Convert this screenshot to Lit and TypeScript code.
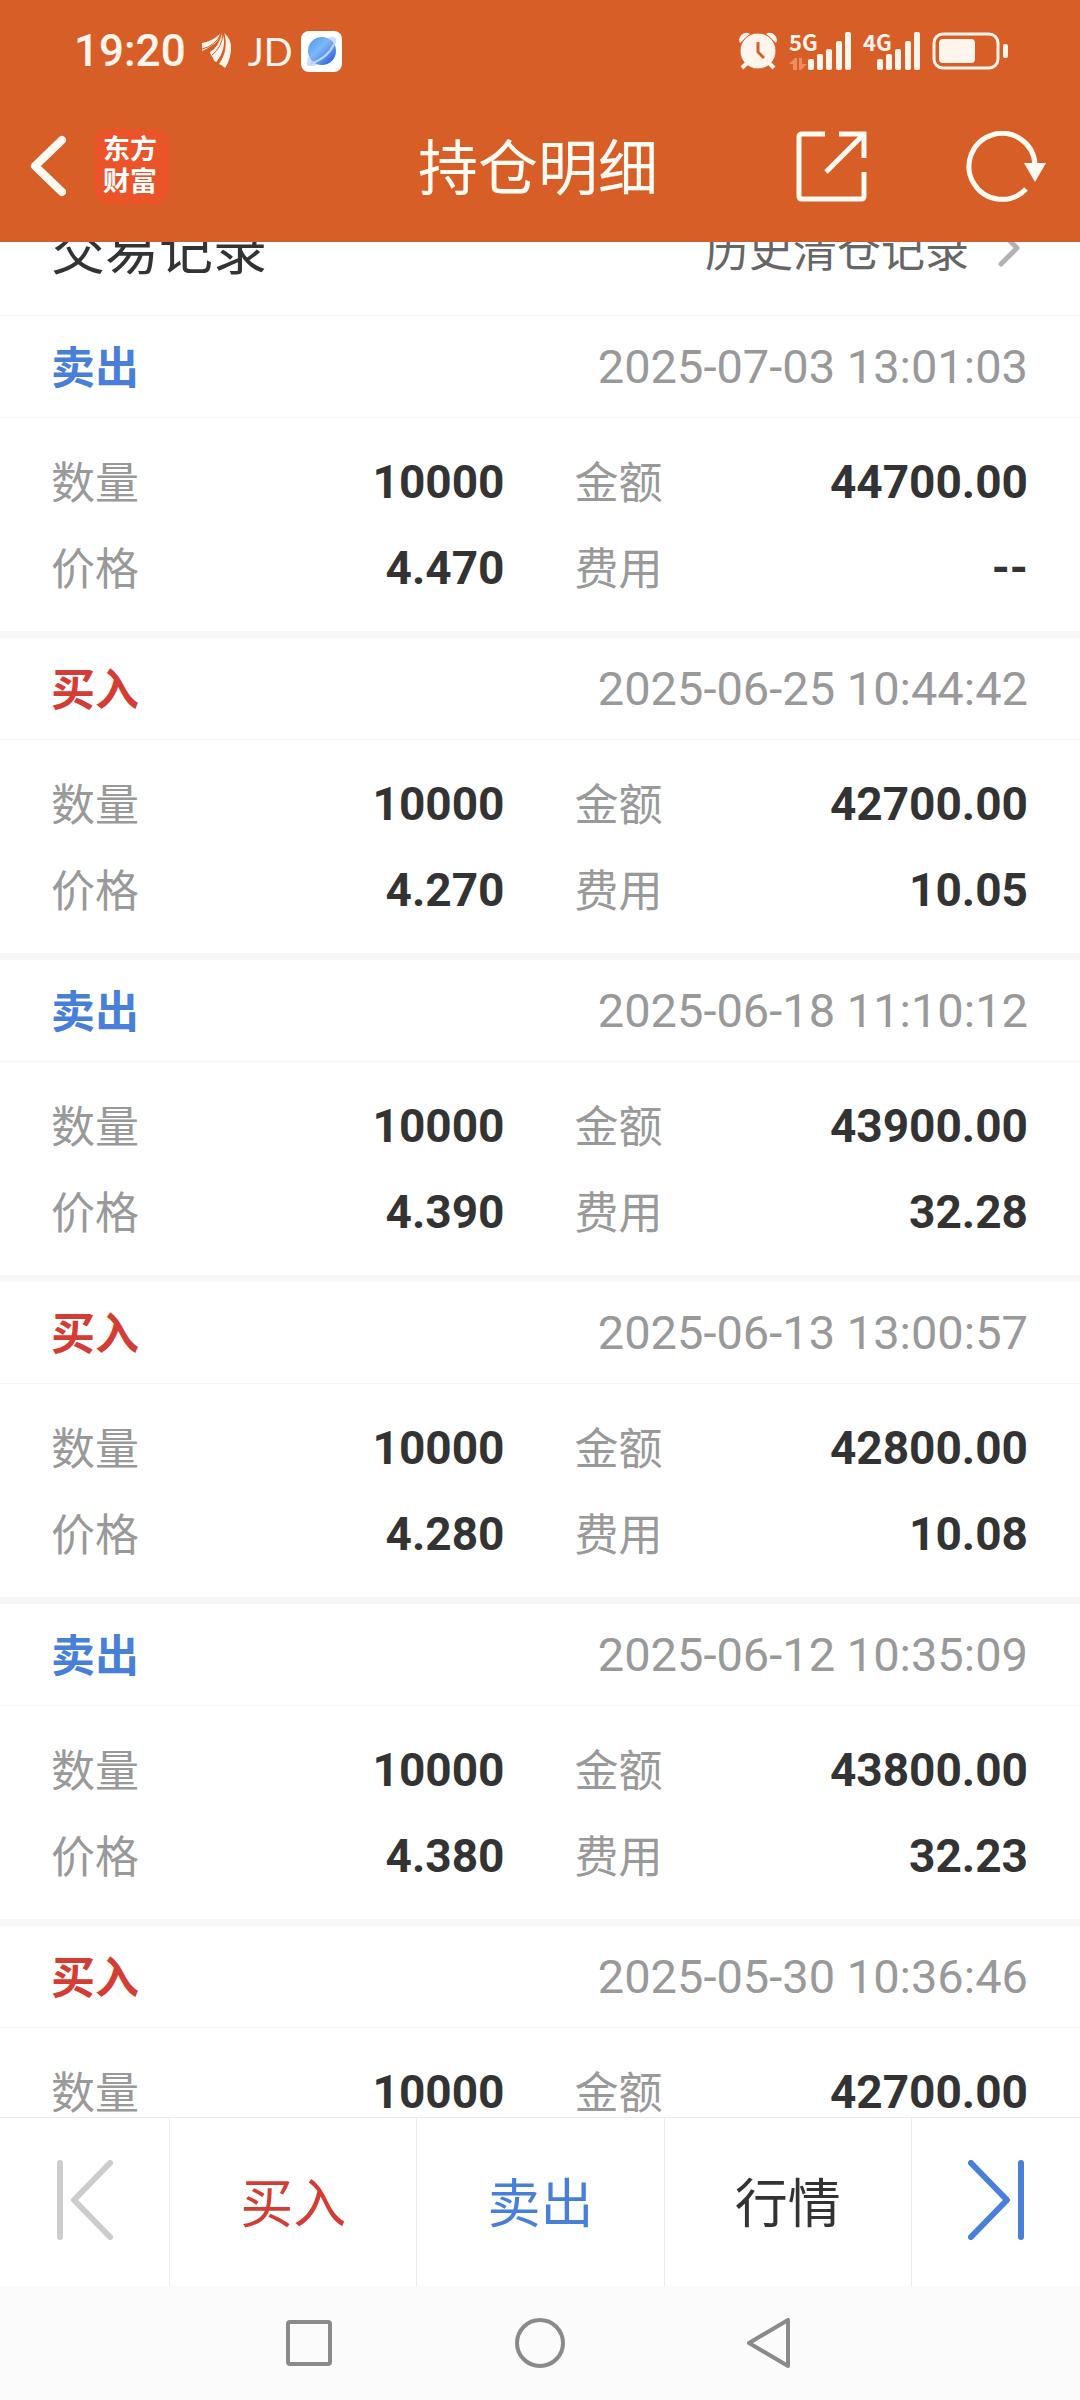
import { LitElement, html, css, svg } from "lit";
import { customElement, property } from "lit/decorators.js";
import { classMap } from "lit/directives/class-map.js";

interface Trade {
  side: "buy" | "sell";
  time: string;
  quantity: string;
  amount: string;
  price: string;
  fee: string;
}

const TRADES: Trade[] = [
  { side: "sell", time: "2025-07-03 13:01:03", quantity: "10000", amount: "44700.00", price: "4.470", fee: "--" },
  { side: "buy", time: "2025-06-25 10:44:42", quantity: "10000", amount: "42700.00", price: "4.270", fee: "10.05" },
  { side: "sell", time: "2025-06-18 11:10:12", quantity: "10000", amount: "43900.00", price: "4.390", fee: "32.28" },
  { side: "buy", time: "2025-06-13 13:00:57", quantity: "10000", amount: "42800.00", price: "4.280", fee: "10.08" },
  { side: "sell", time: "2025-06-12 10:35:09", quantity: "10000", amount: "43800.00", price: "4.380", fee: "32.23" },
  { side: "buy", time: "2025-05-30 10:36:46", quantity: "10000", amount: "42700.00", price: "4.270", fee: "10.05" },
];

const signalBars = svg`
  <rect x="0" y="27" width="6" height="11" rx="2" />
  <rect x="9" y="22" width="6" height="16" rx="2" />
  <rect x="18" y="17" width="6" height="21" rx="2" />
  <rect x="28" y="9" width="6" height="29" rx="2" />
  <rect x="37" y="0" width="6" height="38" rx="2" />`;

@customElement("status-bar")
export class StatusBar extends LitElement {
  static styles = css`
    :host {
      display: flex;
      align-items: center;
      justify-content: space-between;
      height: 102px;
      padding: 0 72px 0 74px;
      color: #fff5ec;
      font-family: Roboto, sans-serif;
    }
    .group {
      display: flex;
      align-items: center;
    }
    .left {
      gap: 16px;
    }
    .right {
      gap: 12px;
    }
    svg {
      display: block;
      fill: currentColor;
    }
    .time {
      font-size: 44px;
      font-weight: 500;
      line-height: 52px;
    }
    .jd {
      font-family: Lato, sans-serif;
      font-size: 38px;
      line-height: 52px;
    }
    .apps {
      display: flex;
      align-items: center;
      gap: 8px;
    }
    .signal {
      position: relative;
      display: flex;
      justify-content: flex-end;
    }
    .signal.five {
      width: 62px;
    }
    .signal.four {
      width: 57px;
    }
    .net {
      position: absolute;
      left: 0;
      top: 0;
      font-family: "Noto Sans CJK SC", sans-serif;
      font-size: 22px;
      font-weight: 700;
      line-height: 18px;
    }
    .data {
      position: absolute;
      left: 0;
      bottom: 0;
      color: #ee8c62;
    }
  `;

  render() {
    return html`
      <div class="group left">
        <span class="time">19:20</span>
        <svg width="30" height="36" viewBox="0 0 30 36" aria-hidden="true">
          <path d="M0 10Q9 9 18 1Q17 9 9 13Q5 16 0 18Z" />
          <path d="M20 0Q20 12 11 24L8 19Q17 14 20 0Z" />
          <path d="M8 20Q17 15 21 1Q25 14 15 29Q12 29 11 25Z" />
          <path d="M22 0Q30 6 29 17Q28 28 23 35Q20 32 17 31Q27 17 22 0Z" />
          <path d="M0 16Q13 13 19 1M10 22Q20 14 21 1M15 29Q26 16 22 1" fill="none" stroke="#d85e27" />
        </svg>
        <div class="apps">
          <span class="jd">JD</span>
          <svg width="41" height="41" viewBox="0 0 41 41" aria-hidden="true">
            <defs>
              <linearGradient id="globe" x1="0.1" y1="0.1" x2="0.9" y2="0.9">
                <stop offset="0" stop-color="#5a9cf2" />
                <stop offset="0.4" stop-color="#7db9f4" />
                <stop offset="1" stop-color="#2f62e0" />
              </linearGradient>
            </defs>
            <rect width="41" height="41" rx="8" fill="#fff" />
            <path d="M27 7Q37 3 35 12L30 16ZM7 26Q4 36 8 35Q14 36 20 32Z" fill="#cfdffb" />
            <circle cx="21" cy="20" r="14" fill="url(#globe)" />
            <path d="M33 13Q27 27 9 33" fill="none" stroke="#b9d6fa" stroke-width="2" />
          </svg>
        </div>
      </div>
      <div class="group right">
        <svg width="38" height="38" viewBox="0 0 38 38" aria-hidden="true">
          <path d="M1 11A7 7 0 0 1 11 2Z" />
          <path d="M27 2A7 7 0 0 1 37 11Z" />
          <circle cx="19" cy="19" r="18" stroke="#d85e27" />
          <path d="M8 31L3 36M30 31L35 36" fill="none" stroke="currentColor" stroke-width="4" />
          <path d="M19 10V20L25 26" fill="none" stroke="#d85e27" stroke-width="3" />
        </svg>
        <div class="signal five">
          <span class="net">5G</span>
          <svg class="data" width="18" height="12" viewBox="0 0 18 12" aria-hidden="true">
            <path d="M0 6L6 0H8V12H4V6ZM10 0H13V6H18L12 12H10Z" />
          </svg>
          <svg width="43" height="38" viewBox="0 0 43 38" aria-hidden="true">${signalBars}</svg>
        </div>
        <div class="signal four">
          <span class="net">4G</span>
          <svg width="43" height="38" viewBox="0 0 43 38" aria-hidden="true">${signalBars}</svg>
        </div>
        <svg width="76" height="38" viewBox="0 0 76 38" aria-hidden="true">
          <rect x="2" y="2" width="64" height="34" rx="9" fill="none" stroke="currentColor" stroke-width="3" />
          <rect x="7" y="7" width="36" height="24" rx="4" />
          <rect x="71" y="12" width="5" height="14" rx="2" />
        </svg>
      </div>
    `;
  }
}

@customElement("trade-card")
export class TradeCard extends LitElement {
  @property({ attribute: false }) trade!: Trade;

  static styles = css`
    :host {
      display: block;
      border-bottom: 7px solid #f6f7f9;
      font-size: 44px;
    }
    .head {
      display: flex;
      align-items: center;
      justify-content: space-between;
      height: 101px;
      padding: 0 52px 0 51px;
      border-bottom: 1px solid #f6f6f6;
    }
    .side {
      margin: 0;
      padding-bottom: 4px;
      font-size: 44px;
      font-weight: 700;
    }
    .side.buy {
      color: #d43d34;
    }
    .side.sell {
      color: #487fd9;
    }
    .time {
      color: #999;
      font-family: Roboto, sans-serif;
      font-size: 47px;
    }
    .facts {
      display: grid;
      grid-template-columns: 1fr 1fr;
      grid-auto-rows: 86px;
      column-gap: 70px;
      margin: 0;
      padding: 21px 52px 20px 51px;
    }
    .fact {
      display: flex;
      align-items: center;
      justify-content: space-between;
    }
    .label {
      padding-bottom: 4px;
      color: #999;
    }
    .value {
      margin: 0;
      color: #333;
      font-family: Roboto, sans-serif;
      font-size: 46px;
      font-weight: 700;
    }
  `;

  render() {
    const t = this.trade;
    const facts = [
      ["数量", t.quantity],
      ["金额", t.amount],
      ["价格", t.price],
      ["费用", t.fee],
    ];
    return html`
      <div class="head">
        <h3 class=${classMap({ side: true, buy: t.side === "buy", sell: t.side === "sell" })}>
          ${t.side === "buy" ? "买入" : "卖出"}
        </h3>
        <time class="time">${t.time}</time>
      </div>
      <dl class="facts">
        ${facts.map(
          ([label, value]) => html`
            <div class="fact">
              <dt class="label">${label}</dt>
              <dd class="value">${value}</dd>
            </div>
          `,
        )}
      </dl>
    `;
  }
}

@customElement("app-root")
export class AppRoot extends LitElement {
  static styles = css`
    :host {
      display: flex;
      flex-direction: column;
      height: 100vh;
      overflow: hidden;
      background: #fff;
      color: #333;
      font-family: "Noto Sans CJK SC", sans-serif;
    }
    svg {
      display: block;
      fill: none;
      stroke: currentColor;
    }
    button {
      display: flex;
      align-items: center;
      justify-content: center;
      padding: 0;
      border: 0;
      background: none;
      color: inherit;
      font: inherit;
    }
    .top {
      position: relative;
      z-index: 1;
      flex: none;
      padding-bottom: 12px;
      background: #d85e27;
      color: #fffaf2;
    }
    .title-bar {
      display: grid;
      grid-template-columns: 1fr auto 1fr;
      align-items: center;
      height: 128px;
      padding: 0 34px 0 30px;
    }
    .lead {
      display: flex;
      align-items: center;
      gap: 28px;
    }
    .brand {
      display: grid;
      box-sizing: border-box;
      place-content: center;
      width: 75px;
      height: 75px;
      padding: 0 3px 4px 0;
      border-radius: 14px;
      background: #eb5328;
      color: #fff;
      font-size: 27px;
      font-weight: 700;
      line-height: 32px;
      text-decoration: none;
    }
    .title {
      margin: 0;
      padding-bottom: 4px;
      font-size: 60px;
      font-weight: 400;
      line-height: 80px;
    }
    .actions {
      display: flex;
      justify-content: flex-end;
      gap: 99px;
    }
    .content {
      flex: 1;
      min-height: 0;
      overflow: hidden;
    }
    /* The list rests slightly scrolled, its heading partly under the top bar. */
    .list-head {
      display: flex;
      align-items: center;
      justify-content: space-between;
      height: 130px;
      margin-top: -57px;
      padding: 0 59px 0 51px;
      border-bottom: 1px solid #f6f6f6;
    }
    .list-title {
      margin: 0;
      padding-bottom: 8px;
      font-size: 54px;
      font-weight: 400;
    }
    .history {
      display: flex;
      align-items: center;
      gap: 28px;
      padding-bottom: 4px;
      color: #666;
      font-size: 44px;
      text-decoration: none;
    }
    .history svg {
      color: #b2b2b2;
    }
    .tabs {
      display: grid;
      flex: none;
      grid-template-columns: 169px 1fr 1fr 1fr 169px;
      height: 168px;
      border-top: 1px solid #e9e9e9;
      background: #fff;
      font-size: 53px;
    }
    .tab {
      padding-bottom: 4px;
    }
    .tab + .tab {
      border-left: 1px solid #ebebeb;
    }
    .tab.first {
      color: #ccc;
    }
    .tab.buy {
      color: #d43d34;
    }
    .tab.sell,
    .tab.last {
      color: #487fd9;
    }
    .system {
      display: flex;
      flex: none;
      justify-content: center;
      height: 114px;
      background: #fbfbfb;
      color: #8a8a8a;
    }
    .key {
      width: 231px;
    }
  `;

  render() {
    return html`
      <header class="top">
        <status-bar></status-bar>
        <div class="title-bar">
          <div class="lead">
            <button aria-label="返回">
              <svg width="36" height="62" viewBox="0 0 36 62" stroke-width="8" stroke-linecap="round" stroke-linejoin="round">
                <path d="M32 5L5 31L32 57" />
              </svg>
            </button>
            <a class="brand" href="#home"><span>东方</span><span>财富</span></a>
          </div>
          <h1 class="title">持仓明细</h1>
          <div class="actions">
            <button aria-label="分享">
              <svg width="71" height="71" viewBox="0 0 71 71" stroke-width="5">
                <path d="M29 3H6Q3 3 3 6V65Q3 68 6 68H65Q68 68 68 65V41M43 3H68V27M67 4L30 41" />
              </svg>
            </button>
            <button aria-label="刷新">
              <svg width="80" height="71" viewBox="0 0 80 71" stroke-width="5">
                <path d="M69 34A33 33 0 1 0 60 58" />
                <path d="M58 32H80L69 51Z" fill="currentColor" stroke="none" />
              </svg>
            </button>
          </div>
        </div>
      </header>

      <main class="content">
        <div class="list-head">
          <h2 class="list-title">交易记录</h2>
          <a class="history" href="#history">
            历史清仓记录
            <svg width="24" height="38" viewBox="0 0 24 38" stroke-width="5" stroke-linecap="round" stroke-linejoin="round">
              <path d="M4 3L20 19L4 35" />
            </svg>
          </a>
        </div>
        ${TRADES.map((trade) => html`<trade-card .trade=${trade}></trade-card>`)}
      </main>

      <nav class="tabs">
        <button class="tab first" aria-label="上一个">
          <svg width="56" height="80" viewBox="0 0 56 80" stroke-width="6" stroke-linecap="round" stroke-linejoin="round">
            <path d="M3 3V77M53 3L17 40L53 77" />
          </svg>
        </button>
        <button class="tab buy">买入</button>
        <button class="tab sell">卖出</button>
        <button class="tab">行情</button>
        <button class="tab last" aria-label="下一个">
          <svg width="56" height="80" viewBox="0 0 56 80" stroke-width="6" stroke-linecap="round" stroke-linejoin="round">
            <path d="M53 3V77M3 3L39 40L3 77" />
          </svg>
        </button>
      </nav>

      <div class="system">
        <button class="key" aria-label="最近任务">
          <svg width="50" height="50" viewBox="0 0 50 50" stroke-width="4">
            <rect x="4" y="4" width="42" height="42" rx="2" />
          </svg>
        </button>
        <button class="key" aria-label="主屏幕">
          <svg width="50" height="50" viewBox="0 0 50 50" stroke-width="4">
            <circle cx="25" cy="25" r="23" />
          </svg>
        </button>
        <button class="key" aria-label="后退">
          <svg width="50" height="50" viewBox="0 0 50 50" stroke-width="4" stroke-linejoin="round">
            <path d="M3 25L42 2V48Z" />
          </svg>
        </button>
      </div>
    `;
  }
}
